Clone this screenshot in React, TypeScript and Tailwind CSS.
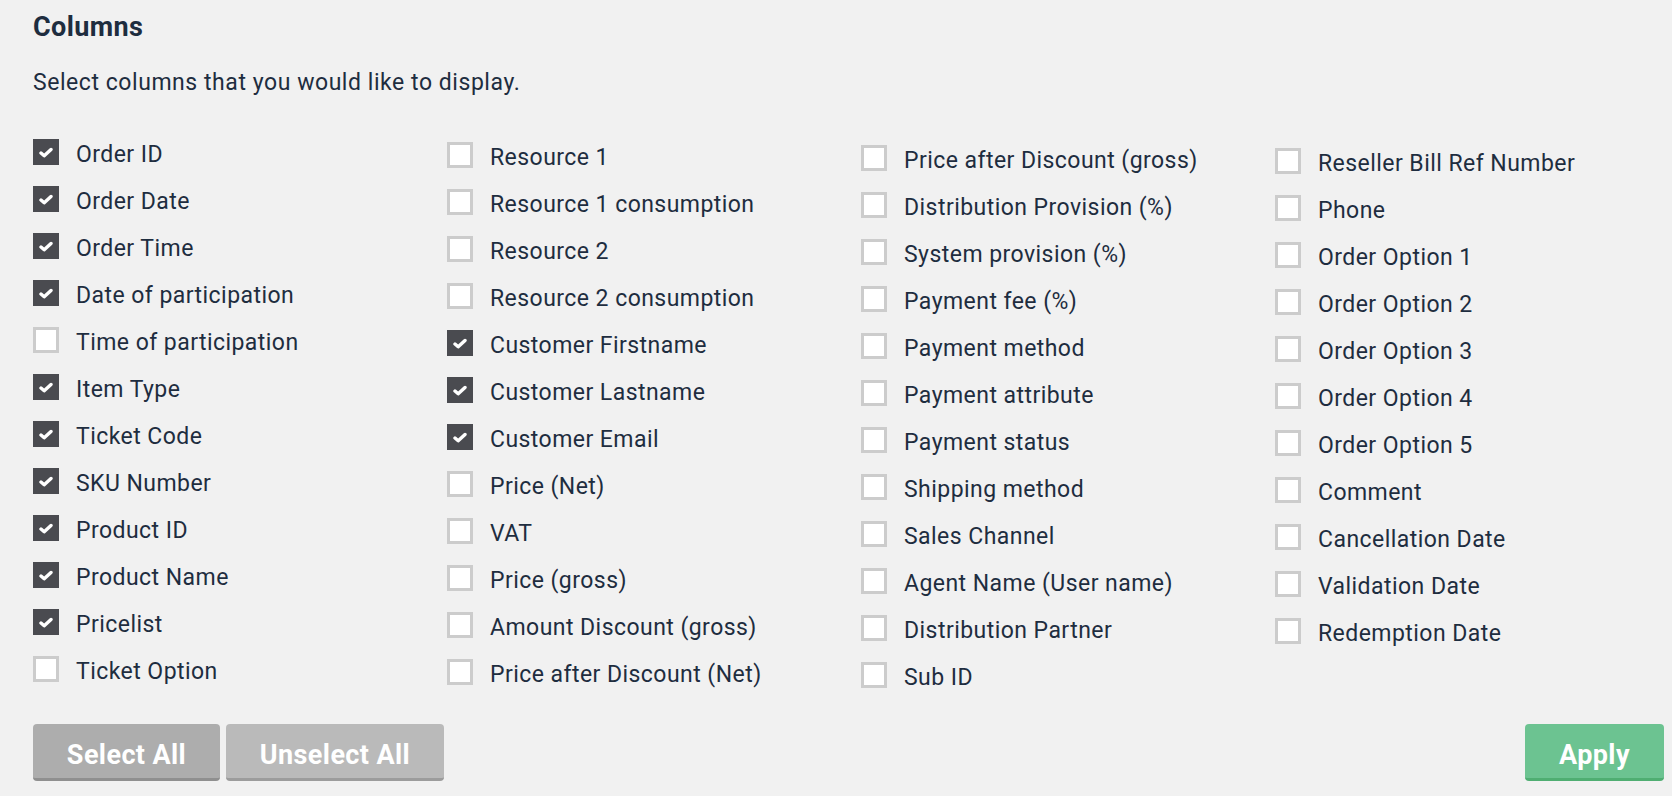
import React, { useState } from 'react'

// Column groups as shown in the dialog, left to right
const groups: { label: string; on: boolean }[][] = [
    [
        { label: 'Order ID', on: true },
        { label: 'Order Date', on: true },
        { label: 'Order Time', on: true },
        { label: 'Date of participation', on: true },
        { label: 'Time of participation', on: false },
        { label: 'Item Type', on: true },
        { label: 'Ticket Code', on: true },
        { label: 'SKU Number', on: true },
        { label: 'Product ID', on: true },
        { label: 'Product Name', on: true },
        { label: 'Pricelist', on: true },
        { label: 'Ticket Option', on: false },
    ],
    [
        { label: 'Resource 1', on: false },
        { label: 'Resource 1 consumption', on: false },
        { label: 'Resource 2', on: false },
        { label: 'Resource 2 consumption', on: false },
        { label: 'Customer Firstname', on: true },
        { label: 'Customer Lastname', on: true },
        { label: 'Customer Email', on: true },
        { label: 'Price (Net)', on: false },
        { label: 'VAT', on: false },
        { label: 'Price (gross)', on: false },
        { label: 'Amount Discount (gross)', on: false },
        { label: 'Price after Discount (Net)', on: false },
    ],
    [
        { label: 'Price after Discount (gross)', on: false },
        { label: 'Distribution Provision (%)', on: false },
        { label: 'System provision (%)', on: false },
        { label: 'Payment fee (%)', on: false },
        { label: 'Payment method', on: false },
        { label: 'Payment attribute', on: false },
        { label: 'Payment status', on: false },
        { label: 'Shipping method', on: false },
        { label: 'Sales Channel', on: false },
        { label: 'Agent Name (User name)', on: false },
        { label: 'Distribution Partner', on: false },
        { label: 'Sub ID', on: false },
    ],
    [
        { label: 'Reseller Bill Ref Number', on: false },
        { label: 'Phone', on: false },
        { label: 'Order Option 1', on: false },
        { label: 'Order Option 2', on: false },
        { label: 'Order Option 3', on: false },
        { label: 'Order Option 4', on: false },
        { label: 'Order Option 5', on: false },
        { label: 'Comment', on: false },
        { label: 'Cancellation Date', on: false },
        { label: 'Validation Date', on: false },
        { label: 'Redemption Date', on: false },
    ],
]

// each column sits a few px lower than the one before it
const offsets = ['mt-0', 'mt-[3px]', 'mt-[6px]', 'mt-[9px]']

const Box = ({ on }: { on: boolean }) =>
    on ? (
        <span className="flex h-[26px] w-[26px] shrink-0 items-center justify-center bg-[#4a4b50]">
            <svg width="14" height="11" viewBox="0 0 14 11" className="-ml-[1px]">
                <path d="M2 6 L5.2 8.8 L12 2.5" fill="none" stroke="#ffffff" strokeWidth="3.4" strokeLinecap="round" strokeLinejoin="round" />
            </svg>
        </span>
    ) : (
        <span className="h-[26px] w-[26px] shrink-0 border-[3px] border-[#cccccc] bg-white" />
    )

export default function App() {
    const [cols, setCols] = useState(groups)

    const toggle = (g: number, i: number) =>
        setCols(prev => prev.map((list, gi) => gi !== g ? list : list.map((c, ci) => ci === i ? { ...c, on: !c.on } : c)))

    const setAll = (on: boolean) => setCols(prev => prev.map(list => list.map(c => ({ ...c, on }))))

    return (
        <div className="min-h-[796px] w-full bg-[#f1f1f1] pl-[33px] pr-[8px] pt-[11px] text-[#1e2d3f]" style={{ fontFamily: 'Roboto, "Noto Sans", sans-serif' }}>
            <h2 className="text-[27px] font-bold leading-[32px] tracking-[0.4px]">Columns</h2>
            <p className="mt-[26px] text-[23px] leading-[28px] tracking-[0.55px]">Select columns that you would like to display.</p>

            <div className="mt-[42px] grid grid-cols-[414px_414px_414px_1fr]">
                {cols.map((list, g) => (
                    <div key={g} className={offsets[g]}>
                        {list.map((c, i) => (
                            <label key={c.label} className="flex h-[47px] cursor-pointer items-start" onClick={() => toggle(g, i)}>
                                <Box on={c.on} />
                                <span className="ml-[17px] mt-[2px] whitespace-nowrap text-[23px] leading-[28px] tracking-[0.45px]">{c.label}</span>
                            </label>
                        ))}
                    </div>
                ))}
            </div>

            <div className="mt-[15px] flex items-start justify-between">
                <div className="flex gap-[6px]">
                    <button onClick={() => setAll(true)} className="h-[57px] w-[187px] rounded-[4px] border-b-[3px] border-[#8f8f8f] bg-[#adadad] pt-[8px] text-[27px] font-bold tracking-[0.4px] text-white">
                        Select All
                    </button>
                    <button onClick={() => setAll(false)} className="h-[57px] w-[218px] rounded-[4px] border-b-[3px] border-[#9c9c9c] bg-[#bababa] pt-[8px] text-[27px] font-bold tracking-[0.4px] text-white">
                        Unselect All
                    </button>
                </div>
                <button className="h-[57px] w-[139px] rounded-[4px] border-b-[3px] border-[#4fae72] bg-[#6cc391] pt-[8px] text-[27px] font-bold tracking-[0.4px] text-white">
                    Apply
                </button>
            </div>
        </div>
    )
}
